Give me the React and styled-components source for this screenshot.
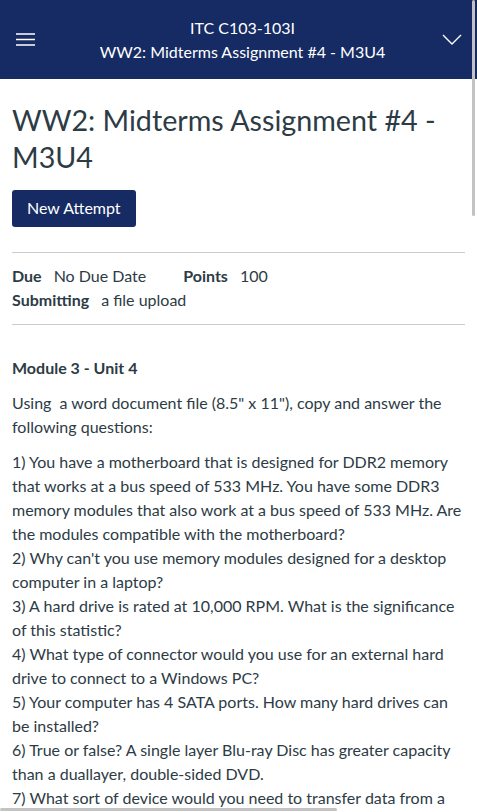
import styled, { createGlobalStyle } from "styled-components";

const GlobalStyle = createGlobalStyle`
  html, body {
    margin: 0;
    padding: 0;
    overflow: hidden;
    background: #fff;
  }
  body {
    font-family: Lato, "Open Sans", "Liberation Sans", sans-serif;
    color: #2d3b45;
  }
  * { box-sizing: border-box; }
`;

const Page = styled.div`
  width: 477px;
  height: 812px;
  overflow: hidden;
  position: relative;
`;

const Header = styled.header`
  height: 79px;
  background: #162b63;
  color: #fff;
  display: flex;
  align-items: center;
  padding: 0 15px;
`;

const IconButton = styled.button`
  border: none;
  background: none;
  padding: 0;
  width: 20px;
  height: 20px;
  display: flex;
  align-items: center;
  justify-content: center;
  color: #fff;
  cursor: pointer;
`;

const HeaderTitles = styled.div`
  flex: 1;
  text-align: center;
  font-size: 16px;
  line-height: 24px;
  margin-top: 1px;
  padding-left: 8px;
`;

const Chevron = styled(IconButton)`
  margin-left: auto;
`;

const Content = styled.main`
  padding: 0 12px;
`;

const Title = styled.h1`
  font-size: 28.7px;
  font-weight: 400;
  line-height: 37px;
  margin: 23px 0 14px;
  color: #2d3b45;
`;

const Button = styled.button`
  font-family: inherit;
  font-size: 16px;
  line-height: 20px;
  padding: 8px 15px 9px;
  border: none;
  border-radius: 3px;
  background: #162b63;
  color: #fff;
  cursor: pointer;
`;

const Rule = styled.hr`
  border: none;
  border-top: 1px solid #c7cdd1;
  margin: ${(p) => p.$top || 0}px 0 0;
`;

const Details = styled.div`
  padding: 11px 0 12px;
  font-size: 16px;
  line-height: 24px;
`;

const DetailRow = styled.div`
  display: flex;
  gap: 37px;
`;

const Detail = styled.div`
  display: flex;
  gap: 12px;
`;

const Label = styled.span`
  font-weight: 700;
`;

const Body = styled.div`
  padding-top: 31px;
  font-size: 16px;
  line-height: 24px;
`;

const Para = styled.p`
  margin: 0 0 11px;
`;

const ScrollV = styled.div`
  position: absolute;
  top: 0;
  right: 2px;
  width: 3px;
  height: 216px;
  border-radius: 2px;
  background: #c3c3c3;
`;

const ScrollH = styled.div`
  position: absolute;
  left: 0;
  bottom: 1px;
  width: 337px;
  height: 3px;
  border-radius: 2px;
  background: #c3c3c3;
`;

const questions = [
  "1) You have a motherboard that is designed for DDR2 memory that works at a bus speed of 533 MHz. You have some DDR3 memory modules that also work at a bus speed of 533 MHz. Are the modules compatible with the motherboard?",
  "2) Why can't you use memory modules designed for a desktop computer in a laptop?",
  "3) A hard drive is rated at 10,000 RPM. What is the significance of this statistic?",
  "4) What type of connector would you use for an external hard drive to connect to a Windows PC?",
  "5) Your computer has 4 SATA ports. How many hard drives can be installed?",
  "6) True or false? A single layer Blu-ray Disc has greater capacity than a duallayer, double-sided DVD.",
  "7) What sort of device would you need to transfer data from a memory card to your computer?",
];

export default function App() {
  return (
    <Page>
      <GlobalStyle />
      <Header>
        <IconButton aria-label="menu">
          <svg width="19" height="13" viewBox="0 0 19 13">
            <path d="M0 1h19M0 6.5h19M0 12h19" stroke="#fff" strokeWidth="1.3" fill="none" />
          </svg>
        </IconButton>
        <HeaderTitles>
          <div>ITC C103-103I</div>
          <div>WW2: Midterms Assignment #4 - M3U4</div>
        </HeaderTitles>
        <Chevron aria-label="more">
          <svg width="20" height="11" viewBox="0 0 20 11">
            <path d="M1 1l9 9 9-9" stroke="#fff" strokeWidth="1.4" fill="none" />
          </svg>
        </Chevron>
      </Header>
      <Content>
        <Title>WW2: Midterms Assignment #4 - M3U4</Title>
        <Button>New Attempt</Button>
        <Rule $top={25} />
        <Details>
          <DetailRow>
            <Detail>
              <Label>Due</Label>
              <span>No Due Date</span>
            </Detail>
            <Detail>
              <Label>Points</Label>
              <span>100</span>
            </Detail>
          </DetailRow>
          <Detail>
            <Label>Submitting</Label>
            <span>a file upload</span>
          </Detail>
        </Details>
        <Rule />
        <Body>
          <Para>
            <Label>Module 3 - Unit 4</Label>
          </Para>
          <Para>Using &nbsp;a word document file (8.5" x 11"), copy and answer the following questions:</Para>
          <Para>
            {questions.map((q) => (
              <span key={q}>
                {q}
                <br />
              </span>
            ))}
          </Para>
        </Body>
      </Content>
      <ScrollV />
      <ScrollH />
    </Page>
  );
}
